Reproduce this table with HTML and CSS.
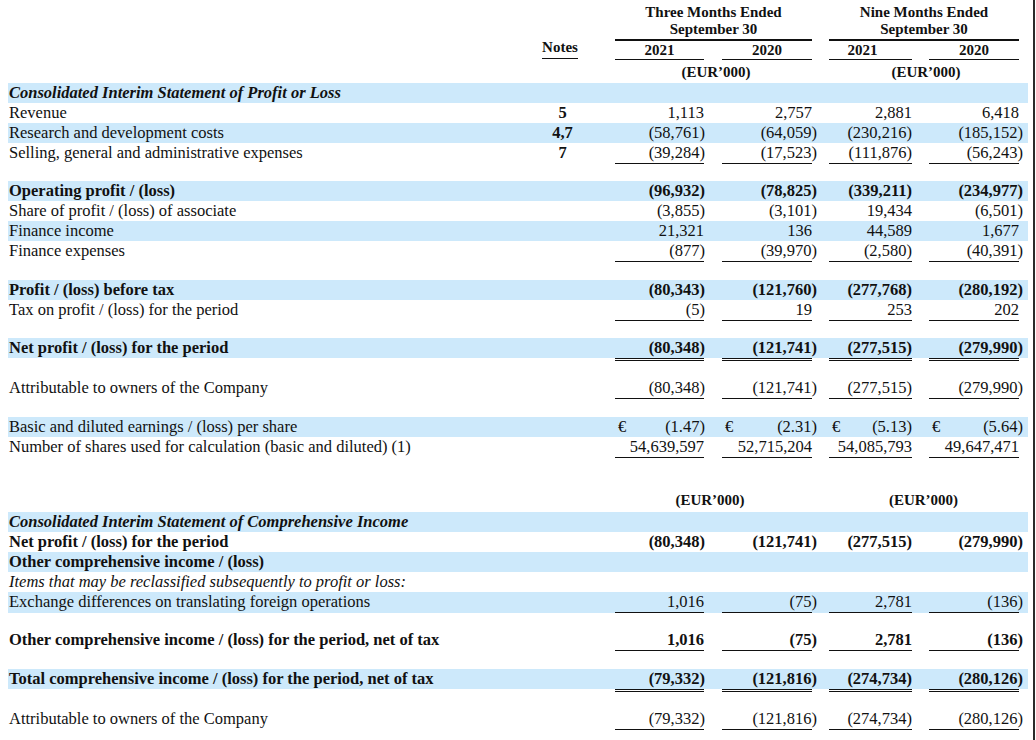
FILE: index.html
```html
<!DOCTYPE html>
<html>
<head>
<meta charset="utf-8">
<link rel="stylesheet" href="styles.css">
</head>
<body>
<div class="page">
<table class="fs">
<colgroup>
<col class="w-label"><col class="w-notes"><col class="w-g0"><col class="w-c1"><col class="w-g1"><col class="w-c2"><col class="w-g2"><col class="w-c3"><col class="w-g3"><col class="w-c4"><col class="w-g4">
</colgroup>
<tbody>
<tr class="hd">
<td></td><td rowspan="2" class="nh"><span>Notes</span></td><td></td>
<td colspan="3" class="ph c2"><div>Three Months Ended<br>September 30</div></td>
<td></td>
<td colspan="3" class="ph c4"><div>Nine Months Ended<br>September 30</div></td>
<td></td>
</tr>
<tr class="hd">
<td></td><td></td>
<td class="yr c1"><div>2021</div></td><td></td>
<td class="yr c2"><div>2020</div></td><td></td>
<td class="yr c3"><div class="off">2021</div></td><td></td>
<td class="yr c4"><div>2020</div></td><td></td>
</tr>
<tr class="hd">
<td></td><td></td><td></td>
<td colspan="3" class="eur e1">(EUR’000)</td><td></td>
<td colspan="3" class="eur e2">(EUR’000)</td><td></td>
</tr>

<tr class="blue"><td class="lb bi">Consolidated Interim Statement of Profit or Loss</td><td colspan="10"></td></tr>
<tr><td class="lb">Revenue</td><td class="nt">5</td><td></td><td class="v c1">1,113</td><td></td><td class="v c2">2,757</td><td></td><td class="v c3">2,881</td><td></td><td class="v c4">6,418</td><td></td></tr>
<tr class="blue"><td class="lb">Research and development costs</td><td class="nt">4,7</td><td></td><td class="v c1"><span class="ng">(58,761)</span></td><td></td><td class="v c2"><span class="ng">(64,059)</span></td><td></td><td class="v c3"><span class="ng">(230,216)</span></td><td></td><td class="v c4"><span class="ng">(185,152)</span></td><td></td></tr>
<tr class="ul"><td class="lb">Selling, general and administrative expenses</td><td class="nt">7</td><td></td><td class="v c1"><span class="ng">(39,284)</span></td><td></td><td class="v c2"><span class="ng">(17,523)</span></td><td></td><td class="v c3"><span class="ng">(111,876)</span></td><td></td><td class="v c4"><span class="ng">(56,243)</span></td><td></td></tr>
<tr class="sp s17"><td colspan="11"></td></tr>

<tr class="blue b"><td class="lb">Operating profit / (loss)</td><td></td><td></td><td class="v c1"><span class="ng">(96,932)</span></td><td></td><td class="v c2"><span class="ng">(78,825)</span></td><td></td><td class="v c3"><span class="ng">(339,211)</span></td><td></td><td class="v c4"><span class="ng">(234,977)</span></td><td></td></tr>
<tr><td class="lb">Share of profit / (loss) of associate</td><td></td><td></td><td class="v c1"><span class="ng">(3,855)</span></td><td></td><td class="v c2"><span class="ng">(3,101)</span></td><td></td><td class="v c3">19,434</td><td></td><td class="v c4"><span class="ng">(6,501)</span></td><td></td></tr>
<tr class="blue"><td class="lb">Finance income</td><td></td><td></td><td class="v c1">21,321</td><td></td><td class="v c2">136</td><td></td><td class="v c3">44,589</td><td></td><td class="v c4">1,677</td><td></td></tr>
<tr class="ul"><td class="lb">Finance expenses</td><td></td><td></td><td class="v c1"><span class="ng">(877)</span></td><td></td><td class="v c2"><span class="ng">(39,970)</span></td><td></td><td class="v c3"><span class="ng">(2,580)</span></td><td></td><td class="v c4"><span class="ng">(40,391)</span></td><td></td></tr>
<tr class="sp s18"><td colspan="11"></td></tr>

<tr class="blue b"><td class="lb">Profit / (loss) before tax</td><td></td><td></td><td class="v c1"><span class="ng">(80,343)</span></td><td></td><td class="v c2"><span class="ng">(121,760)</span></td><td></td><td class="v c3"><span class="ng">(277,768)</span></td><td></td><td class="v c4"><span class="ng">(280,192)</span></td><td></td></tr>
<tr class="ul"><td class="lb">Tax on profit / (loss) for the period</td><td></td><td></td><td class="v c1"><span class="ng">(5)</span></td><td></td><td class="v c2">19</td><td></td><td class="v c3">253</td><td></td><td class="v c4">202</td><td></td></tr>
<tr class="sp s17"><td colspan="11"></td></tr>

<tr class="blue b dl"><td class="lb">Net profit / (loss) for the period</td><td></td><td></td><td class="v c1"><span class="ng">(80,348)</span></td><td></td><td class="v c2"><span class="ng">(121,741)</span></td><td></td><td class="v c3"><span class="ng">(277,515)</span></td><td></td><td class="v c4"><span class="ng">(279,990)</span></td><td></td></tr>
<tr class="sp s17"><td colspan="11"></td></tr>

<tr class="ul"><td class="lb">Attributable to owners of the Company</td><td></td><td></td><td class="v c1"><span class="ng">(80,348)</span></td><td></td><td class="v c2"><span class="ng">(121,741)</span></td><td></td><td class="v c3"><span class="ng">(277,515)</span></td><td></td><td class="v c4"><span class="ng">(279,990)</span></td><td></td></tr>
<tr class="sp s18"><td colspan="11"></td></tr>

<tr class="blue"><td class="lb">Basic and diluted earnings / (loss) per share</td><td></td><td></td><td class="v c1"><span class="cur">€</span><span class="ng">(1.47)</span></td><td></td><td class="v c2"><span class="cur">€</span><span class="ng">(2.31)</span></td><td></td><td class="v c3"><span class="cur">€</span><span class="ng">(5.13)</span></td><td></td><td class="v c4"><span class="cur">€</span><span class="ng">(5.64)</span></td><td></td></tr>
<tr class="ul"><td class="lb">Number of shares used for calculation (basic and diluted) (1)</td><td></td><td></td><td class="v c1">54,639,597</td><td></td><td class="v c2">52,715,204</td><td></td><td class="v c3">54,085,793</td><td></td><td class="v c4">49,647,471</td><td></td></tr>
<tr class="sp s34"><td colspan="11"></td></tr>

<tr class="eurrow"><td></td><td></td><td></td><td colspan="3" class="eur e1">(EUR’000)</td><td></td><td colspan="3" class="eur e2">(EUR’000)</td><td></td></tr>
<tr class="blue"><td class="lb bi">Consolidated Interim Statement of Comprehensive Income</td><td colspan="10"></td></tr>
<tr class="b"><td class="lb">Net profit / (loss) for the period</td><td></td><td></td><td class="v c1"><span class="ng">(80,348)</span></td><td></td><td class="v c2"><span class="ng">(121,741)</span></td><td></td><td class="v c3"><span class="ng">(277,515)</span></td><td></td><td class="v c4"><span class="ng">(279,990)</span></td><td></td></tr>
<tr class="blue b"><td class="lb">Other comprehensive income / (loss)</td><td colspan="10"></td></tr>
<tr><td class="lb it">Items that may be reclassified subsequently to profit or loss:</td><td colspan="10"></td></tr>
<tr class="blue ul"><td class="lb">Exchange differences on translating foreign operations</td><td></td><td></td><td class="v c1">1,016</td><td></td><td class="v c2"><span class="ng">(75)</span></td><td></td><td class="v c3">2,781</td><td></td><td class="v c4"><span class="ng">(136)</span></td><td></td></tr>
<tr class="sp s17"><td colspan="11"></td></tr>

<tr class="ul b"><td class="lb">Other comprehensive income / (loss) for the period, net of tax</td><td></td><td></td><td class="v c1">1,016</td><td></td><td class="v c2"><span class="ng">(75)</span></td><td></td><td class="v c3">2,781</td><td></td><td class="v c4"><span class="ng">(136)</span></td><td></td></tr>
<tr class="sp s18"><td colspan="11"></td></tr>

<tr class="blue b dl"><td class="lb">Total comprehensive income / (loss) for the period, net of tax</td><td></td><td></td><td class="v c1"><span class="ng">(79,332)</span></td><td></td><td class="v c2"><span class="ng">(121,816)</span></td><td></td><td class="v c3"><span class="ng">(274,734)</span></td><td></td><td class="v c4"><span class="ng">(280,126)</span></td><td></td></tr>
<tr class="sp s17"><td colspan="11"></td></tr>

<tr class="ul"><td class="lb">Attributable to owners of the Company</td><td></td><td></td><td class="v c1"><span class="ng">(79,332)</span></td><td></td><td class="v c2"><span class="ng">(121,816)</span></td><td></td><td class="v c3"><span class="ng">(274,734)</span></td><td></td><td class="v c4"><span class="ng">(280,126)</span></td><td></td></tr>
</tbody>
</table>
</div>
</body>
</html>
```

FILE: styles.css
```css
* { box-sizing: border-box; }
html, body { margin: 0; background: #fff; }
body {
  font-family: "Liberation Serif", "Times New Roman", serif;
  color: #111;
}
.page {
  width: 1035px;
  height: 740px;
  padding-left: 8px;
  border-right: 2px solid #2b2b2b;
  overflow: hidden;
}
.fs {
  border-spacing: 0;
  border-collapse: separate;
  table-layout: fixed;
  width: 1020px;
  font-size: 16.5px;
}
.fs td {
  padding: 0;
  line-height: 20px;
  white-space: nowrap;
  vertical-align: top;
}
col.w-label { width: 522px; }
col.w-notes { width: 60px; }
col.w-g0 { width: 25px; }
col.w-c1 { width: 90px; }
col.w-g1 { width: 17px; }
col.w-c2 { width: 95px; }
col.w-g2 { width: 12px; }
col.w-c3 { width: 83px; }
col.w-g3 { width: 17px; }
col.w-c4 { width: 94px; }
col.w-g4 { width: 5px; }

.c1 { --ur: 1px; }
.c2 { --ur: 5px; }
.c3 { --ur: 0px; }
.c4 { --ur: 4px; }

/* header */
.hd td { font-size: 15px; font-weight: bold; line-height: 17px; }
.ph { text-align: center; }
.ph div {
  padding: 4px 0 1px;
  margin-right: var(--ur);
  border-bottom: 2px solid #111;
}
.yr { text-align: center; }
.yr div {
  padding-top: 1px;
  margin-right: var(--ur);
  border-bottom: 1px solid #111;
}
.yr .off { padding-right: 16px; }
.fs td.nh { vertical-align: bottom; text-align: center; }
.nh span {
  display: table;
  margin: 0 auto 1px;
  padding-bottom: 2px;
  border-bottom: 1px solid #111;
}
.fs .hd td.eur { padding: 4px 0 2px; }
.eur { text-align: center; }
.fs td.e1 { padding-right: 12px; }
.fs td.e2 { padding-right: 5px; }
.fs .eurrow td { font-size: 15px; font-weight: bold; line-height: 17px; padding-bottom: 3px; }
.fs .eurrow td.e1 { padding-right: 12px; }
.fs .eurrow td.e2 { padding-right: 5px; }

/* body */
.fs td.lb { padding-left: 1px; }
.bi { font-weight: bold; font-style: italic; }
.it { font-style: italic; }
.b td { font-weight: bold; }
.fs td.nt { text-align: center; padding-left: 5px; font-weight: bold; }
.fs td.v { text-align: right; padding-right: var(--ur); }
.ng { margin-right: calc(-1 * var(--ur)); }
.cur { float: left; padding-left: 3px; }

tr.blue td { background-color: #cde9fb; }

tr.ul td { padding-bottom: 1px; }
tr.ul td.v {
  background-image: linear-gradient(#111, #111);
  background-repeat: no-repeat;
  background-position: left bottom;
  background-size: calc(100% - var(--ur)) 1px;
}

tr.dl td {
  padding-bottom: 3px;
  background-color: transparent;
  background-image: linear-gradient(#cde9fb, #cde9fb);
  background-repeat: no-repeat;
  background-position: left top;
  background-size: 100% 20px;
}
tr.dl td.v {
  background-image: linear-gradient(#111, #111), linear-gradient(#111, #111), linear-gradient(#cde9fb, #cde9fb);
  background-repeat: no-repeat;
  background-position: left bottom, left calc(100% - 2px), left top;
  background-size: calc(100% - var(--ur)) 1px, calc(100% - var(--ur)) 1px, 100% 20px;
}

tr.sp td { padding: 0; line-height: 0; font-size: 0; }
tr.s17 { height: 17px; }
tr.s18 { height: 18px; }
tr.s34 { height: 34px; }
```
